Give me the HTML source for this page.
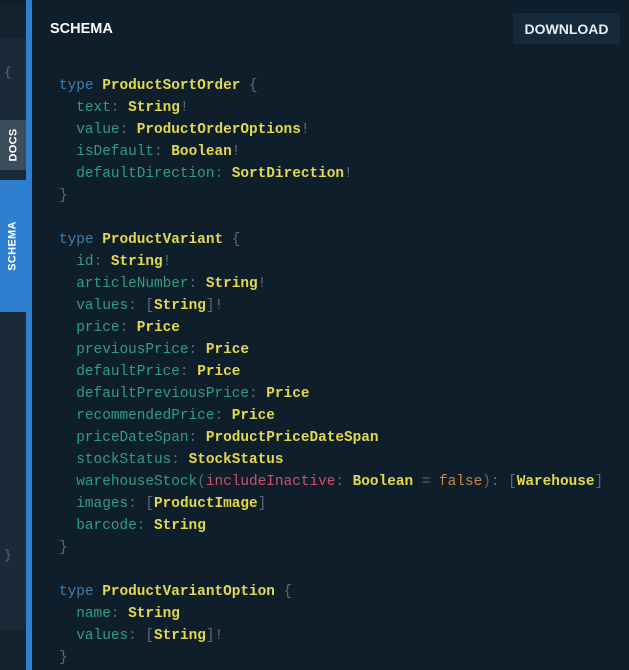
<!DOCTYPE html>
<html><head><style>
body{margin:0;width:629px;height:670px;background:#0f1e2b;overflow:hidden;position:relative;font-family:"Liberation Sans",sans-serif}
.l{position:absolute;left:0;top:0;width:26px;height:670px;background:#1a2a3a}
.bar{position:absolute;left:26px;top:0;width:6px;height:670px;background:#2f7fd1}
.tab{position:absolute;left:0;width:26px;color:#fff;font-weight:bold;font-size:11px;display:flex;align-items:center;justify-content:center}
.tab span{transform:rotate(-90deg);white-space:nowrap;letter-spacing:.3px}
pre{position:absolute;left:59px;top:75px;margin:0;font-family:"Liberation Mono",monospace;font-size:14.4px;line-height:22px;color:#5b6b76}
.k{color:#3d7fb3}.t{color:#e3d94c;font-weight:bold}.f{color:#2f9f83}.a{color:#d0516a}.v{color:#d0843e}
</style></head><body>
<div class="l"></div>
<div style="position:absolute;left:0;top:0;width:26px;height:5px;background:#0f1e2b"></div>
<div style="position:absolute;left:0;top:5px;width:26px;height:33px;background:#15232f"></div>
<div style="position:absolute;left:0;top:630px;width:26px;height:40px;background:#15232f"></div>
<div style="position:absolute;left:4px;top:65px;color:#5b6b76;font-family:'Liberation Mono',monospace;font-size:13px">{</div>
<div style="position:absolute;left:4px;top:548px;color:#5b6b76;font-family:'Liberation Mono',monospace;font-size:13px">}</div>
<div class="tab" style="top:120px;height:50px;background:#3d4e5b"><span>DOCS</span></div>
<div class="tab" style="top:180px;height:132px;background:#2f7fd1"><span>SCHEMA</span></div>
<div class="bar"></div>
<div style="position:absolute;left:50px;top:21px;color:#fff;font-weight:bold;font-size:14.5px">SCHEMA</div>
<div style="position:absolute;left:513px;top:13px;width:107px;height:31px;background:#172a3a;color:#e6eef3;font-weight:bold;font-size:14px;display:flex;align-items:center;justify-content:center">DOWNLOAD</div>
<pre><span class="k">type</span> <span class="t">ProductSortOrder</span> {
  <span class="f">text</span>: <span class="t">String</span>!
  <span class="f">value</span>: <span class="t">ProductOrderOptions</span>!
  <span class="f">isDefault</span>: <span class="t">Boolean</span>!
  <span class="f">defaultDirection</span>: <span class="t">SortDirection</span>!
}

<span class="k">type</span> <span class="t">ProductVariant</span> {
  <span class="f">id</span>: <span class="t">String</span>!
  <span class="f">articleNumber</span>: <span class="t">String</span>!
  <span class="f">values</span>: [<span class="t">String</span>]!
  <span class="f">price</span>: <span class="t">Price</span>
  <span class="f">previousPrice</span>: <span class="t">Price</span>
  <span class="f">defaultPrice</span>: <span class="t">Price</span>
  <span class="f">defaultPreviousPrice</span>: <span class="t">Price</span>
  <span class="f">recommendedPrice</span>: <span class="t">Price</span>
  <span class="f">priceDateSpan</span>: <span class="t">ProductPriceDateSpan</span>
  <span class="f">stockStatus</span>: <span class="t">StockStatus</span>
  <span class="f">warehouseStock</span>(<span class="a">includeInactive</span>: <span class="t">Boolean</span> = <span class="v">false</span>): [<span class="t">Warehouse</span>]
  <span class="f">images</span>: [<span class="t">ProductImage</span>]
  <span class="f">barcode</span>: <span class="t">String</span>
}

<span class="k">type</span> <span class="t">ProductVariantOption</span> {
  <span class="f">name</span>: <span class="t">String</span>
  <span class="f">values</span>: [<span class="t">String</span>]!
}</pre>
</body></html>
